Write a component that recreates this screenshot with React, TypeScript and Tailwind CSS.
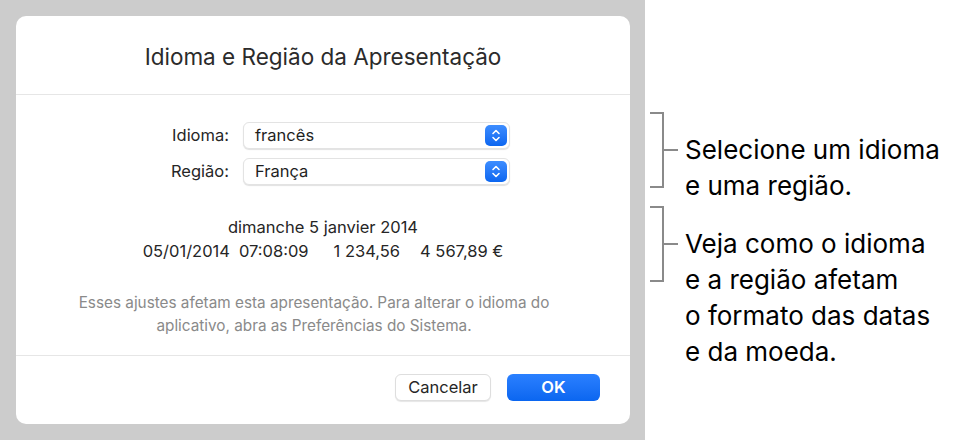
const font = { fontFamily: 'Inter, "Liberation Sans", sans-serif' };

function Stepper() {
  return (
    <div className="w-[22px] h-[21px] rounded-[5px] bg-gradient-to-b from-[#3d8dff] to-[#0a66f0] flex items-center justify-center">
      <svg width="10" height="15" viewBox="0 0 10 15" fill="none">
        <path d="M2 5.5 L5 2.5 L8 5.5" stroke="white" strokeWidth="1.6" strokeLinecap="round" strokeLinejoin="round" />
        <path d="M2 9.5 L5 12.5 L8 9.5" stroke="white" strokeWidth="1.6" strokeLinecap="round" strokeLinejoin="round" />
      </svg>
    </div>
  );
}

function SelectRow({ label, value }: { label: string; value: string }) {
  return (
    <div className="flex items-center">
      <div className="w-[214px] pr-[1px] text-right text-[16.5px] text-[#262626]">{label}</div>
      <div className="ml-[13px] w-[267px] h-[27px] bg-white rounded-[6px] border border-[#e3e3e3] shadow-[0_1px_1px_rgba(0,0,0,0.12)] flex items-center justify-between pl-[11px] pr-[2px]">
        <span className="text-[16.5px] text-[#1f1f1f]">{value}</span>
        <Stepper />
      </div>
    </div>
  );
}

function Bracket() {
  return (
    <div className="relative w-[28px] h-[76px] shrink-0">
      <div className="absolute left-[12px] top-0 w-[2px] h-[76px] bg-[#8a8a8a]" />
      <div className="absolute left-0 top-0 w-[14px] h-[2px] bg-[#8a8a8a]" />
      <div className="absolute left-0 bottom-0 w-[14px] h-[2px] bg-[#8a8a8a]" />
      <div className="absolute left-[12px] top-[37px] w-[16px] h-[2px] bg-[#8a8a8a]" />
    </div>
  );
}

export default function App() {
  return (
    <div className="w-[964px] h-[443px] bg-white flex" style={font}>
      <div className="w-[645px] h-[440px] bg-[#cccccc] p-4 shrink-0">
        <div className="w-[614px] h-[408px] bg-white rounded-[10px] flex flex-col">
          <div className="h-[78px] flex items-center justify-center pt-[3px] text-[22.5px] text-[#2b2b2b]">
            Idioma e Região da Apresentação
          </div>
          <div className="h-[1px] bg-[#e6e6e6]" />
          <div className="h-[260px] flex flex-col pt-[27px]">
            <div className="flex flex-col gap-[9px]">
              <SelectRow label="Idioma:" value="francês" />
              <SelectRow label="Região:" value="França" />
            </div>
            <div className="mt-[30px] flex flex-col items-center text-[16.5px] text-[#262626] leading-[24px]">
              <div>dimanche 5 janvier 2014</div>
              <div className="flex">
                <span>05/01/2014</span>
                <span className="ml-[9px]">07:08:09</span>
                <span className="ml-[25px]">1 234,56</span>
                <span className="ml-[20px]">4 567,89 €</span>
              </div>
            </div>
            <div className="mt-[28px] pr-[18px] text-center text-[15.3px] leading-[23px] text-[#8a8a8a]">
              Esses ajustes afetam esta apresentação. Para alterar o idioma do<br />
              aplicativo, abra as Preferências do Sistema.
            </div>
          </div>
          <div className="h-[1px] bg-[#e6e6e6]" />
          <div className="flex-1 flex justify-end items-start pt-[18px] pr-[30px] gap-[16px]">
            <button className="w-[96px] h-[27px] rounded-[6px] bg-white border border-[#dedede] shadow-[0_1px_1px_rgba(0,0,0,0.1)] text-[16.5px] text-[#262626]">
              Cancelar
            </button>
            <button className="w-[93px] h-[27px] rounded-[6px] bg-gradient-to-b from-[#2a80ff] to-[#0a66f0] text-[16.5px] font-semibold text-white">
              OK
            </button>
          </div>
        </div>
      </div>
      <div className="flex flex-col pl-[5px] pt-[112px] text-[26px] text-black leading-[36px]">
        <div className="flex items-start">
          <Bracket />
          <div className="pl-[7px] pt-[20px]">
            <div>Selecione um idioma</div>
            <div>e uma região.</div>
          </div>
        </div>
        <div className="flex items-start mt-[2px]">
          <Bracket />
          <div className="pl-[7px] pt-[20px]">
            <div>Veja como o idioma</div>
            <div>e a região afetam</div>
            <div>o formato das datas</div>
            <div>e da moeda.</div>
          </div>
        </div>
      </div>
    </div>
  );
}
